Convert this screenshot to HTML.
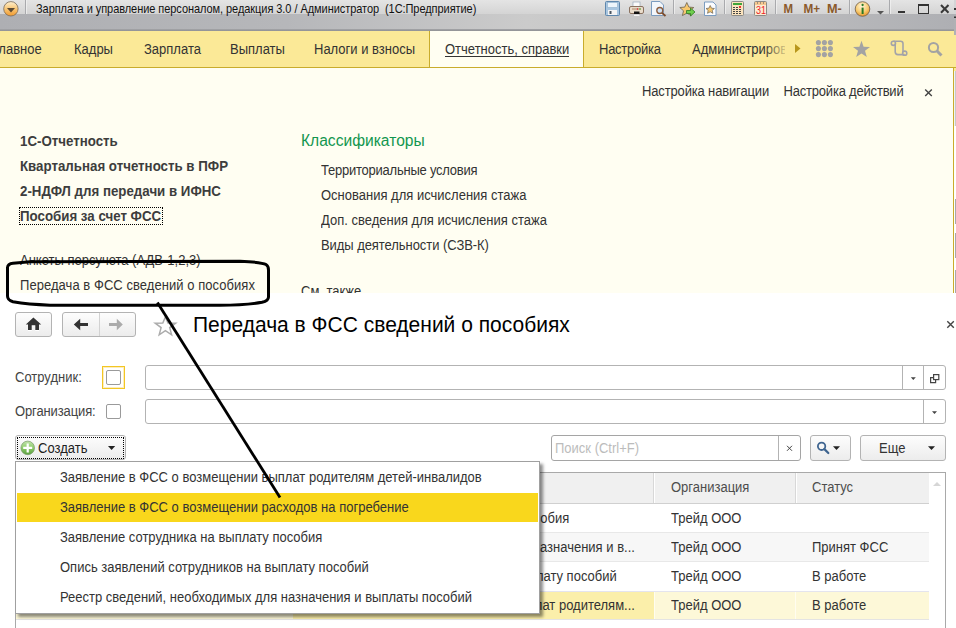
<!DOCTYPE html>
<html><head><meta charset="utf-8">
<style>
*{margin:0;padding:0;box-sizing:border-box}
html,body{width:956px;height:628px;overflow:hidden;background:#fff;font-family:"Liberation Sans",sans-serif;font-size:13px;color:#333}
.a{position:absolute;white-space:nowrap;line-height:16px}
#title{position:absolute;left:0;top:0;width:956px;height:31px;background:linear-gradient(90deg,#aeafb3 0%,#b6b7ba 30%,#cbcbcb 55%,#c4c4c5 70%,#aeafb3 100%)}
#title .hi{position:absolute;left:0;top:0;width:956px;height:14px;background:linear-gradient(#e4e4e4,#d4d4d4)}
#title .ln{position:absolute;left:0;top:29px;width:956px;height:2px;background:linear-gradient(#a4a5a8,#8f9094)}
#tabs{position:absolute;left:0;top:31px;width:956px;height:37px;background:#fbe997;border-bottom:1px solid #c9ac2c}
.tab{position:absolute;top:10.5px;color:#333;line-height:16px}
#panel{position:absolute;left:0;top:68px;width:954px;height:225px;background:#fffef2;border-right:1px solid #c9ac2c}
#edge{position:absolute;left:954px;top:71px;width:2px;height:55px;background:#f2f2f2;border-right:1px solid #c8c8c8}
#win{position:absolute;left:0;top:293px;width:956px;height:335px;background:#fff}
.btn{position:absolute;border:1px solid #b3b3b3;border-radius:3px;background:linear-gradient(#fdfdfd,#ececec)}
.fld{position:absolute;border:1px solid #b3b3b3;border-radius:3px;background:#fff}
.bold{font-weight:bold;font-size:13.3px;color:#3d3d3d}
.a,.tab{transform:scaleY(1.08);transform-origin:0 12.5px}
</style></head><body>
<div id="title"><div class="hi"></div><div class="ln"></div>
<div class="a" style="left:36px;top:1.5px;font-size:11px;color:#111;line-height:14px;letter-spacing:-0.06px">Зарплата и управление персоналом, редакция 3.0 / Администратор&nbsp; (1С:Предприятие)</div>
<svg width="956" height="35" style="position:absolute;left:0;top:0">
<defs>
<linearGradient id="og" x1="0" y1="0" x2="0" y2="1"><stop offset="0" stop-color="#fff0d0"/><stop offset="0.5" stop-color="#f8c676"/><stop offset="1" stop-color="#f29a2e"/></linearGradient>
</defs>
<circle cx="10.9" cy="8.8" r="7.2" fill="url(#og)" stroke="#7a6a58" stroke-width="0.8"/>
<path d="M7 8 L15 8 L11 12.5 Z" fill="#5b4a35"/>
<g stroke="#a9aaad" stroke-width="1"><line x1="25.5" y1="0" x2="25.5" y2="14"/><line x1="673.5" y1="0" x2="673.5" y2="14"/><line x1="724.5" y1="0" x2="724.5" y2="14"/><line x1="775.5" y1="0" x2="775.5" y2="14"/><line x1="849.5" y1="0" x2="849.5" y2="14"/><line x1="889.5" y1="0" x2="889.5" y2="14"/></g>
<g stroke="#f4f4f4" stroke-width="1" opacity="0.7"><line x1="26.5" y1="0" x2="26.5" y2="14"/><line x1="674.5" y1="0" x2="674.5" y2="14"/><line x1="725.5" y1="0" x2="725.5" y2="14"/><line x1="776.5" y1="0" x2="776.5" y2="14"/><line x1="850.5" y1="0" x2="850.5" y2="14"/><line x1="890.5" y1="0" x2="890.5" y2="14"/></g>
<!-- floppy -->
<rect x="605.5" y="1.5" width="14" height="14" rx="1" fill="#a9c6e0" stroke="#5f87ad"/>
<rect x="607.5" y="2.5" width="10" height="5" fill="#eef5fb" stroke="#8fb0cc" stroke-width="0.6"/>
<rect x="608" y="10" width="9" height="5" fill="#f4f4f4"/>
<rect x="609.5" y="11" width="2" height="3" fill="#4a5560"/>
<!-- printer -->
<rect x="633" y="2" width="7" height="5" fill="#fafafa" stroke="#9aa8b8" stroke-width="0.7"/>
<rect x="629.5" y="6.5" width="14" height="7" rx="1.5" fill="#e9dccb" stroke="#8a7260"/>
<rect x="632" y="8.5" width="9" height="1" fill="#b08a6a"/>
<circle cx="637.5" cy="9" r="0.7" fill="#e23"/><circle cx="640" cy="9" r="0.7" fill="#3b3"/>
<rect x="634" y="11.5" width="5.5" height="3" fill="#111"/>
<rect x="634" y="14.3" width="5.5" height="1.5" fill="#fff"/>
<!-- preview -->
<path d="M651.5 1.5 H660 L663.5 5 V15.5 H651.5 Z" fill="#f2f6fb" stroke="#7b9cc0"/>
<circle cx="659.8" cy="10.5" r="3" fill="#cfe3f6" stroke="#8a5a3a" stroke-width="1.3"/>
<line x1="662" y1="12.8" x2="665.5" y2="16" stroke="#7a4a2a" stroke-width="1.8"/>
<!-- star arrow -->
<path d="M686.8 2.5 L688.9 7.1 L693.8 7.5 L690.1 10.8 L691.2 15.6 L686.8 13.1 L682.4 15.6 L683.5 10.8 L679.8 7.5 L684.7 7.1 Z" fill="#f7c86e" stroke="#6a6050" stroke-width="0.8"/>
<path d="M686.5 10.5 H690.5 V8 L695 12 L690.5 16 V13.5 H686.5 Z" fill="#6fcf4e" stroke="#2e7a22" stroke-width="0.8"/>
<!-- doc star -->
<path d="M704.5 2 H713 L716 5 V15.5 H704.5 Z" fill="#fbfcfe" stroke="#7b9cc0"/>
<path d="M710.2 5.5 L711.5 8.2 L714.4 8.5 L712.2 10.4 L712.9 13.3 L710.2 11.8 L707.5 13.3 L708.2 10.4 L706 8.5 L708.9 8.2 Z" fill="#f7c86e" stroke="#6a6050" stroke-width="0.7"/>
<!-- calculator -->
<rect x="731.5" y="1.5" width="12" height="14" rx="1" fill="#fbe3bd" stroke="#8c8a86"/>
<rect x="733" y="3" width="9" height="2" fill="#3fa53a"/>
<g fill="#444"><rect x="733" y="7" width="2" height="1"/><rect x="736" y="7" width="2" height="1"/><rect x="733" y="9" width="2" height="1"/><rect x="736" y="9" width="2" height="1"/><rect x="739" y="9" width="2" height="1"/><rect x="733" y="11" width="2" height="1"/><rect x="736" y="11" width="2" height="1"/><rect x="739" y="11" width="2" height="1"/><rect x="733" y="13" width="2" height="1"/><rect x="736" y="13" width="2" height="1"/><rect x="739" y="13" width="2" height="1"/></g>
<rect x="739" y="6" width="2" height="2" fill="#e33"/>
<!-- calendar -->
<rect x="754.5" y="1.5" width="12" height="14" rx="1" fill="#fcebd4" stroke="#8c8a86"/>
<rect x="755" y="2" width="11" height="3" fill="#f6c992"/>
<g fill="#555"><rect x="757" y="2.5" width="1" height="1"/><rect x="760" y="2.5" width="1" height="1"/><rect x="763" y="2.5" width="1" height="1"/></g>
<text x="0" y="14.5" font-family="Liberation Sans" font-size="10" fill="#e22" transform="translate(756 0) scale(0.9 1)">31</text>
<!-- M M+ M- -->
<g font-family="Liberation Sans" font-weight="bold" font-size="13" fill="#8b5a2b">
<text x="0" y="13.5" transform="translate(783.5 0) scale(0.88 1)">M</text>
<text x="0" y="13.5" transform="translate(803.5 0) scale(0.9 1)">M+</text>
<text x="0" y="13.5" transform="translate(827 0) scale(0.98 1)">M-</text>
</g>
<!-- info -->
<defs><radialGradient id="ig" cx="0.45" cy="0.3" r="0.7"><stop offset="0" stop-color="#fff6dc"/><stop offset="0.6" stop-color="#f8cc72"/><stop offset="1" stop-color="#e8962a"/></radialGradient></defs>
<circle cx="862.5" cy="9" r="7.3" fill="url(#ig)" stroke="#6c5d4a" stroke-width="0.8"/>
<rect x="861.6" y="7.6" width="2" height="6.4" fill="#2a7a26"/><circle cx="862.6" cy="5" r="1.15" fill="#2a7a26"/>
<path d="M877 11 H884 L880.5 14.5 Z" fill="#555"/>
<!-- min max close -->
<rect x="898" y="11" width="7" height="2" fill="#333"/>
<rect x="918.5" y="4.5" width="10" height="9" fill="none" stroke="#333" stroke-width="1"/>
<rect x="918.5" y="4.5" width="10" height="1.5" fill="#333"/>
<path d="M941 5 L948.5 12.8 M948.5 5 L941 12.8" stroke="#383838" stroke-width="2"/>
<rect x="954" y="0" width="2" height="35" fill="#d4d4d6"/><rect x="954" y="14" width="2" height="21" fill="#b0b1b4"/><rect x="954" y="8" width="2" height="2" fill="#333"/><rect x="954" y="16.5" width="2" height="1.5" fill="#333"/>
</svg>
</div>
<div id="tabs">
<div class="tab" style="left:-8px">Главное</div>
<div class="tab" style="left:74px">Кадры</div>
<div class="tab" style="left:144px">Зарплата</div>
<div class="tab" style="left:230px">Выплаты</div>
<div class="tab" style="left:314px">Налоги и взносы</div>
<div style="position:absolute;left:429px;top:0;width:155px;height:36px;background:#fffef2;border-left:1px solid #c9ac2c;border-right:1px solid #c9ac2c"></div>
<div class="tab" style="left:445px">Отчетность, справки</div>
<div style="position:absolute;left:445px;top:25px;width:124px;height:1px;background:#333"></div>
<div class="tab" style="left:599px;letter-spacing:-0.25px">Настройка</div>
<div class="tab" style="left:692px;width:93px;overflow:hidden">Администрирование</div>
<div style="position:absolute;left:764px;top:0;width:22px;height:36px;background:linear-gradient(90deg,rgba(251,233,151,0),rgba(251,233,151,0.85) 100%)"></div>
<svg width="956" height="36" style="position:absolute;left:0;top:0">
<path d="M795 13 L800.5 17.5 L795 22 Z" fill="#b8961c"/>
<g fill="#a3a3a3"><circle cx="818.4" cy="11.6" r="2.55"/><circle cx="824.4" cy="11.6" r="2.55"/><circle cx="830.4" cy="11.6" r="2.55"/><circle cx="818.4" cy="17.6" r="2.55"/><circle cx="824.4" cy="17.6" r="2.55"/><circle cx="830.4" cy="17.6" r="2.55"/><circle cx="818.4" cy="23.6" r="2.55"/><circle cx="824.4" cy="23.6" r="2.55"/><circle cx="830.4" cy="23.6" r="2.55"/></g>
<path d="M861.5 9.8 L863.6 15.7 L870 15.9 L865 19.8 L866.8 26 L861.5 22.4 L856.2 26 L858 19.8 L853 15.9 L859.4 15.7 Z" fill="#a3a3a3"/>
<g fill="none" stroke="#a3a3a8" stroke-width="1.6"><path d="M893.4 10.2 H900.6 Q903 10.2 903 12.6 V21.2"/><path d="M895.2 12.8 V20.8 Q895.2 23.6 898 23.6 H904.6"/><circle cx="893.4" cy="12.3" r="2.1"/><circle cx="904.7" cy="22.2" r="2.1"/></g>
<circle cx="933.5" cy="16.5" r="4.6" fill="none" stroke="#a3a3a3" stroke-width="2"/>
<line x1="936.8" y1="19.8" x2="941.5" y2="24.5" stroke="#a3a3a3" stroke-width="3"/>
</svg>
</div>
<div id="panel">
<div class="a" style="left:642px;top:16px;letter-spacing:-0.15px">Настройка навигации</div>
<div class="a" style="left:783.5px;top:16px;letter-spacing:-0.2px">Настройка действий</div>
<svg width="20" height="20" style="position:absolute;left:918px;top:14px"><path d="M7.2 7.4 L13.8 13.9 M13.8 7.4 L7.2 13.9" stroke="#444" stroke-width="1.4"/></svg>
<div style="position:absolute;left:19px;top:139px;width:144px;height:18px;border:1px dotted #000"></div>
<div class="a bold" style="left:20px;top:66px">1С-Отчетность</div>
<div class="a bold" style="left:20px;top:91px">Квартальная отчетность в ПФР</div>
<div class="a bold" style="left:20px;top:116px">2-НДФЛ для передачи в ИФНС</div>
<div class="a bold" style="left:20px;top:141px">Пособия за счет ФСС</div>
<div class="a" style="left:20px;top:185px">Анкеты персучета (АДВ-1,2,3)</div>
<div class="a" style="left:20px;top:210px;letter-spacing:0.05px">Передача в ФСС сведений о пособиях</div>
<div class="a" style="left:301px;top:63px;font-size:15.6px;color:#12964f;line-height:20px">Классификаторы</div>
<div class="a" style="left:321px;top:95px;letter-spacing:-0.23px">Территориальные условия</div>
<div class="a" style="left:321px;top:120px">Основания для исчисления стажа</div>
<div class="a" style="left:321px;top:145px">Доп. сведения для исчисления стажа</div>
<div class="a" style="left:321px;top:170px;letter-spacing:-0.06px">Виды деятельности (СЗВ-К)</div>
<div class="a" style="left:301px;top:215.5px">См. также</div>
</div>
<div id="edge"></div>
<div style="position:absolute;left:954px;top:31px;width:2px;height:4px;background:#b0b1b4"></div>
<div style="position:absolute;left:954px;top:68px;width:2px;height:3px;background:#fbe997"></div>
<div style="position:absolute;left:955px;top:199px;width:1px;height:25px;background:#a8a8a8"></div>
<div style="position:absolute;left:955px;top:233px;width:1px;height:25px;background:#a8a8a8"></div>
<div style="position:absolute;left:955px;top:270px;width:1px;height:23px;background:#a8a8a8"></div>
<div id="win">
<div class="btn" style="left:15px;top:19px;width:37px;height:25px"></div>
<div class="btn" style="left:62px;top:19px;width:74px;height:25px"></div>
<div style="position:absolute;left:99px;top:20px;width:1px;height:23px;background:#d2d2d2"></div>
<svg width="956" height="335" style="position:absolute;left:0;top:0">
<!-- home -->
<path d="M33.4 24.6 L41.2 31.6 H39 V37 H35.3 V32.3 H31.7 V37 H28 V31.6 H25.8 Z" fill="#fff" transform="translate(0 1)"/>
<path d="M33.4 24.6 L41.2 31.6 H39 V37 H35.3 V32.3 H31.7 V37 H28 V31.6 H25.8 Z" fill="#333"/>
<!-- back -->
<path d="M73.8 31.5 L80.2 25.8 V30 H88 V33 H80.2 V37.2 Z" fill="#333"/>
<!-- forward -->
<path d="M122.8 31.5 L116.8 25.8 V30 H109 V33 H116.8 V37.2 Z" fill="#ababab"/>
<!-- star outline -->
<path d="M165.4 24 L168 30 L175.6 30.2 L169.7 34.6 L171.6 41.8 L165.4 37.6 L159.2 41.8 L161.1 34.6 L155.2 30.2 L162.8 30 Z" fill="none" stroke="#acacac" stroke-width="1.5" stroke-linejoin="miter"/>
<!-- close -->
<path d="M947.3 28.3 L953.8 34.7 M953.8 28.3 L947.3 34.7" stroke="#444" stroke-width="1.4"/>
</svg>
<div class="a" style="left:193px;top:19.8px;font-size:21px;line-height:24px;color:#000;transform-origin:0 19px">Передача в ФСС сведений о пособиях</div>
<div class="a" style="left:15px;top:77px;color:#444">Сотрудник:</div>
<div class="a" style="left:15px;top:111px;color:#444;letter-spacing:-0.12px">Организация:</div>
<div style="position:absolute;left:102px;top:73px;width:23px;height:23px;border:1px solid #f3c623;box-shadow:inset 0 0 0 1px rgba(248,215,110,0.45)"></div>
<div style="position:absolute;left:106px;top:77px;width:15px;height:15px;border:1px solid #9a9a9a;border-radius:2px;background:#fff"></div>
<div style="position:absolute;left:106px;top:111px;width:15px;height:15px;border:1px solid #9a9a9a;border-radius:2px;background:#fff"></div>
<div class="fld" style="left:145px;top:72px;width:801px;height:25px"></div>
<div style="position:absolute;left:902px;top:73px;width:1px;height:23px;background:#b3b3b3"></div>
<div style="position:absolute;left:923px;top:73px;width:1px;height:23px;background:#b3b3b3"></div>
<div class="fld" style="left:145px;top:106px;width:801px;height:25px"></div>
<div style="position:absolute;left:923px;top:107px;width:1px;height:23px;background:#b3b3b3"></div>
<div class="fld" style="left:551px;top:142px;width:250px;height:26px;border-color:#a5a5a5"></div>
<div style="position:absolute;left:778px;top:143px;width:1px;height:24px;background:#b3b3b3"></div>
<div class="a" style="left:555px;top:147.5px;color:#bcbcbc">Поиск (Ctrl+F)</div>
<div class="btn" style="left:810px;top:142px;width:41px;height:26px"></div>
<div class="btn" style="left:860px;top:142px;width:86px;height:26px"></div>
<div class="a" style="left:879px;top:148px;color:#333">Еще</div>
<div class="btn" style="left:15px;top:142px;width:111px;height:25px"></div>
<svg width="956" height="335" style="position:absolute;left:0;top:0">
<path d="M910.8 84.3 H915.8 L913.3 87 Z" fill="#444"/>
<path d="M932 118.3 H937 L934.5 121 Z" fill="#444"/>
<g fill="none" stroke="#444" stroke-width="1.2"><rect x="933.6" y="81.6" width="5.2" height="5"/><path d="M933.6 84.6 H930.6 V89.6 H935.6 V86.6"/></g>
<path d="M787 152.8 L792 157.8 M792 152.8 L787 157.8" stroke="#444" stroke-width="1"/>
<circle cx="821.6" cy="153.3" r="3.7" fill="none" stroke="#3f6590" stroke-width="1.8"/>
<line x1="824.4" y1="156.1" x2="828.3" y2="160" stroke="#3f6590" stroke-width="2.2" stroke-linecap="round"/>
<path d="M833 153.2 H840 L836.5 157 Z" fill="#222"/>
<path d="M928 153.2 H935 L931.5 157 Z" fill="#222"/>
<path d="M108 153 H115.2 L111.6 157 Z" fill="#222"/>

<defs><linearGradient id="gg" x1="0" y1="0" x2="0" y2="1"><stop offset="0" stop-color="#c2e4ac"/><stop offset="0.5" stop-color="#8ccb6a"/><stop offset="1" stop-color="#5aa03c"/></linearGradient></defs>
<circle cx="27.7" cy="154.9" r="6.8" fill="url(#gg)" stroke="#7a9a6a" stroke-width="0.7"/>
<path d="M26.6 150.4 H28.8 V153.8 H32.2 V156 H28.8 V159.4 H26.6 V156 H23.2 V153.8 H26.6 Z" fill="#fff"/>
</svg>
<div style="position:absolute;left:17px;top:144px;width:107px;height:22px;border:1px dotted #000"></div>
<div class="a" style="left:38px;top:148px;color:#222">Создать</div>
<!-- table -->
<div style="position:absolute;left:15px;top:179px;width:931px;height:160px;border:1px solid #a9a9a9;background:#fff"></div>
<div style="position:absolute;left:16px;top:180px;width:913px;height:31px;background:#f0f0f0;border-bottom:1px solid #d0d0d0"></div>
<div style="position:absolute;left:653px;top:180px;width:1px;height:30px;background:#d8d8d8"></div>
<div style="position:absolute;left:654px;top:180px;width:1px;height:30px;background:#fff"></div>
<div style="position:absolute;left:795px;top:180px;width:1px;height:30px;background:#d8d8d8"></div>
<div style="position:absolute;left:796px;top:180px;width:1px;height:30px;background:#fff"></div>
<svg width="12" height="8" style="position:absolute;left:931px;top:187px"><path d="M2 6 L6 2 L10 6 Z" fill="#d6d6d6"/></svg>
<div style="position:absolute;left:16px;top:239px;width:913px;height:30px;background:#f7f7f7;border-top:1px solid #e8e8e8;border-bottom:1px solid #e8e8e8"></div>
<div style="position:absolute;left:16px;top:298px;width:913px;height:29px;background:#fdf8d8;border-top:1px solid #e4e4ee;border-bottom:1px solid #e4e4e4"></div>
<div style="position:absolute;left:293px;top:299px;width:361px;height:27px;background:#fbefaa"></div>
<div style="position:absolute;left:795px;top:299px;width:1px;height:27px;background:#fffdf0"></div>
<div style="position:absolute;left:654px;top:299px;width:1px;height:27px;background:#fffdf0"></div>
<div class="a" style="left:671px;top:187px;color:#4d4d4d">Организация</div>
<div class="a" style="left:812px;top:187px;color:#4d4d4d">Статус</div>
<div class="a" style="left:307px;top:218px;color:#333">Заявление сотрудника на выплату пособия</div>
<div class="a" style="left:671px;top:218px;color:#333">Трейд ООО</div>
<div class="a" style="left:312px;top:247px;color:#333">Реестр сведений, необходимых для назначения и в...</div>
<div class="a" style="left:671px;top:247px;color:#333">Трейд ООО</div>
<div class="a" style="left:812px;top:247px;color:#333">Принят ФСС</div>
<div class="a" style="left:308px;top:276px;color:#333">Опись заявлений сотрудников на выплату пособий</div>
<div class="a" style="left:671px;top:276px;color:#333">Трейд ООО</div>
<div class="a" style="left:812px;top:276px;color:#333">В работе</div>
<div class="a" style="left:310px;top:305px;color:#333">Заявление в ФСС о возмещении выплат родителям...</div>
<div class="a" style="left:671px;top:305px;color:#333">Трейд ООО</div>
<div class="a" style="left:812px;top:305px;color:#333">В работе</div>
<!-- menu -->
<div style="position:absolute;left:15px;top:168px;width:525px;height:153px;border:1px solid #a0a0a0;background:#fff;box-shadow:3px 3px 3px rgba(0,0,0,0.45)"></div>
<div style="position:absolute;left:17px;top:200px;width:521px;height:29px;background:#f9d71c"></div>
<div class="a" style="left:60px;top:177px;color:#333">Заявление в ФСС о возмещении выплат родителям детей-инвалидов</div>
<div class="a" style="left:60px;top:207px;color:#333">Заявление в ФСС о возмещении расходов на погребение</div>
<div class="a" style="left:60px;top:237px;color:#333">Заявление сотрудника на выплату пособия</div>
<div class="a" style="left:60px;top:267px;color:#333">Опись заявлений сотрудников на выплату пособий</div>
<div class="a" style="left:60px;top:297px;color:#333">Реестр сведений, необходимых для назначения и выплаты пособий</div>
</div>
<svg width="956" height="628" style="position:absolute;left:0;top:0">
<path d="M7.5 272 L7.5 267.5 Q7.8 263.6 13 263.2 L30 261.8 L240 261.2 Q262 262.2 266 264.5 Q268.5 266 268.5 270 L268.5 297 Q268.5 300.8 262 302.3 Q245 305.2 220 305.2 L50 305.2 Q28 304.4 13 301.8 Q7.5 300.2 7.5 296 Z" fill="none" stroke="#000" stroke-width="3"/>
<path d="M157.4 302.5 L280 497.5" stroke="#000" stroke-width="2.8" stroke-linecap="butt"/>
</svg>
</body></html>
